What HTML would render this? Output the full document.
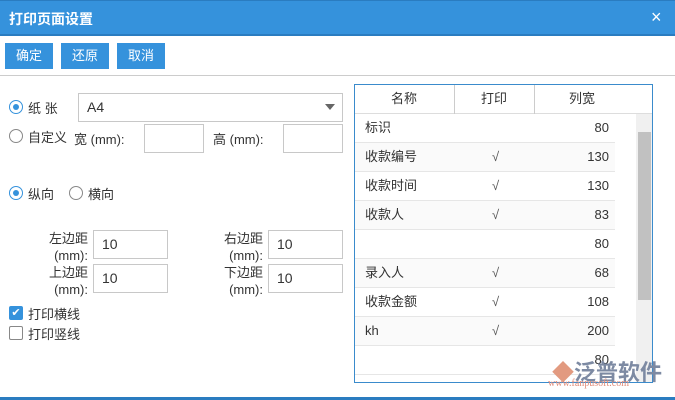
<!DOCTYPE html><html><head><meta charset="utf-8"><style>
*{margin:0;padding:0;box-sizing:border-box}
body{width:675px;height:400px;background:#fff;font-family:"Liberation Sans","Noto Sans CJK SC",sans-serif;font-size:13px;color:#333;position:relative;overflow:hidden}
.a{position:absolute}
.title{left:0;top:0;width:675px;height:36px;background:#3592dc;border-bottom:2px solid #2a7cc0;border-top:1px solid #2a7cc0}
.title span{position:absolute;left:9px;top:8px;color:#fff;font-size:14px;font-weight:bold}
.btn{top:43px;width:48px;height:26px;background:#3592dc;color:#fff;font-size:13px;text-align:center;line-height:26px}
.inp{border:1px solid #c8c8c8;height:29px;background:#fff;padding-left:8px;line-height:27px;font-size:14px}
.radio{width:14px;height:14px;border:1px solid #888;border-radius:50%}
.radio.on{border-color:#3592dc}
.radio.on::after{content:"";position:absolute;left:3px;top:3px;width:6px;height:6px;border-radius:50%;background:#3592dc}
.tbl{left:354px;top:84px;width:299px;height:299px;border:1px solid #3a8bcc;overflow:hidden}
.row{position:absolute;left:0;width:260px;height:29px;border-bottom:1px solid #e6e6e6;line-height:28px}
.row .n{position:absolute;left:10px}.row .p{position:absolute;left:137px;color:#555}.row .w{position:absolute;right:6px}
</style></head><body>
<div class="a title"><span>打印页面设置</span><span style="left:651px;top:6px;font-weight:normal;font-size:18px">×</span></div>
<div class="a btn" style="left:5px">确定</div>
<div class="a btn" style="left:61px">还原</div>
<div class="a btn" style="left:117px">取消</div>
<div class="a" style="left:0;top:75px;width:675px;height:1px;background:#ccc"></div>
<div class="a radio on" style="left:9px;top:100px"></div>
<div class="a" style="left:28px;top:98px">纸 张</div>
<div class="a inp" style="left:78px;top:93px;width:265px">A4</div>
<div class="a" style="left:325px;top:104px;width:0;height:0;border-left:5px solid transparent;border-right:5px solid transparent;border-top:6px solid #666"></div>
<div class="a radio" style="left:9px;top:129px"></div>
<div class="a" style="left:28px;top:127px">自定义</div>
<div class="a" style="left:74px;top:129px">宽 (mm):</div>
<div class="a inp" style="left:144px;top:124px;width:60px"></div>
<div class="a" style="left:213px;top:129px">高 (mm):</div>
<div class="a inp" style="left:283px;top:124px;width:60px"></div>
<div class="a radio on" style="left:9px;top:186px"></div>
<div class="a" style="left:28px;top:184px">纵向</div>
<div class="a radio" style="left:69px;top:186px"></div>
<div class="a" style="left:88px;top:184px">横向</div>
<div class="a" style="left:44px;top:230px;text-align:right;width:44px;line-height:17px">左边距<br>(mm):</div>
<div class="a inp" style="left:93px;top:230px;width:75px">10</div>
<div class="a" style="left:219px;top:230px;text-align:right;width:44px;line-height:17px">右边距<br>(mm):</div>
<div class="a inp" style="left:268px;top:230px;width:75px">10</div>
<div class="a" style="left:44px;top:264px;text-align:right;width:44px;line-height:17px">上边距<br>(mm):</div>
<div class="a inp" style="left:93px;top:264px;width:75px">10</div>
<div class="a" style="left:219px;top:264px;text-align:right;width:44px;line-height:17px">下边距<br>(mm):</div>
<div class="a inp" style="left:268px;top:264px;width:75px">10</div>
<div class="a" style="left:9px;top:306px;width:14px;height:14px;background:#3592dc;border-radius:2px;color:#fff;font-size:11px;line-height:14px;text-align:center">✔</div>
<div class="a" style="left:28px;top:304px">打印横线</div>
<div class="a" style="left:9px;top:326px;width:14px;height:14px;border:1px solid #888;border-radius:2px"></div>
<div class="a" style="left:28px;top:324px">打印竖线</div>
<div class="a tbl">
<div class="a" style="left:0;top:0;width:297px;height:29px;border-bottom:1px solid #ddd;line-height:28px">
<span class="a" style="left:36px">名称</span><span class="a" style="left:126px">打印</span><span class="a" style="left:214px">列宽</span>
<div class="a" style="left:99px;top:0;width:1px;height:29px;background:#ccc"></div><div class="a" style="left:179px;top:0;width:1px;height:29px;background:#ccc"></div></div>
<div class="row" style="top:29px"><span class="n">标识</span><span class="w">80</span></div>
<div class="row" style="top:58px;background:#fafafa"><span class="n">收款编号</span><span class="p">√</span><span class="w">130</span></div>
<div class="row" style="top:87px"><span class="n">收款时间</span><span class="p">√</span><span class="w">130</span></div>
<div class="row" style="top:116px;background:#fafafa"><span class="n">收款人</span><span class="p">√</span><span class="w">83</span></div>
<div class="row" style="top:145px"><span class="w">80</span></div>
<div class="row" style="top:174px;background:#fafafa"><span class="n">录入人</span><span class="p">√</span><span class="w">68</span></div>
<div class="row" style="top:203px"><span class="n">收款金额</span><span class="p">√</span><span class="w">108</span></div>
<div class="row" style="top:232px;background:#fafafa"><span class="n">kh</span><span class="p">√</span><span class="w">200</span></div>
<div class="row" style="top:261px"><span class="w">80</span></div>
<div class="a" style="left:281px;top:29px;width:16px;height:270px;background:#f0f0f0"></div>
<div class="a" style="left:283px;top:47px;width:13px;height:168px;background:#c1c1c1"></div>
</div>
<div class="a" style="left:552px;top:355px;font-size:22px;color:#7d8aa3;font-weight:bold"><span style="color:#e29a80">◆</span>泛普软件</div>
<div class="a" style="left:548px;top:378px;font-size:10px;color:#e08a78;font-family:'Liberation Serif',serif">www.fanpusoft.com</div>
<div class="a" style="left:0;top:397px;width:675px;height:3px;background:#2a7cc0"></div>
</body></html>
